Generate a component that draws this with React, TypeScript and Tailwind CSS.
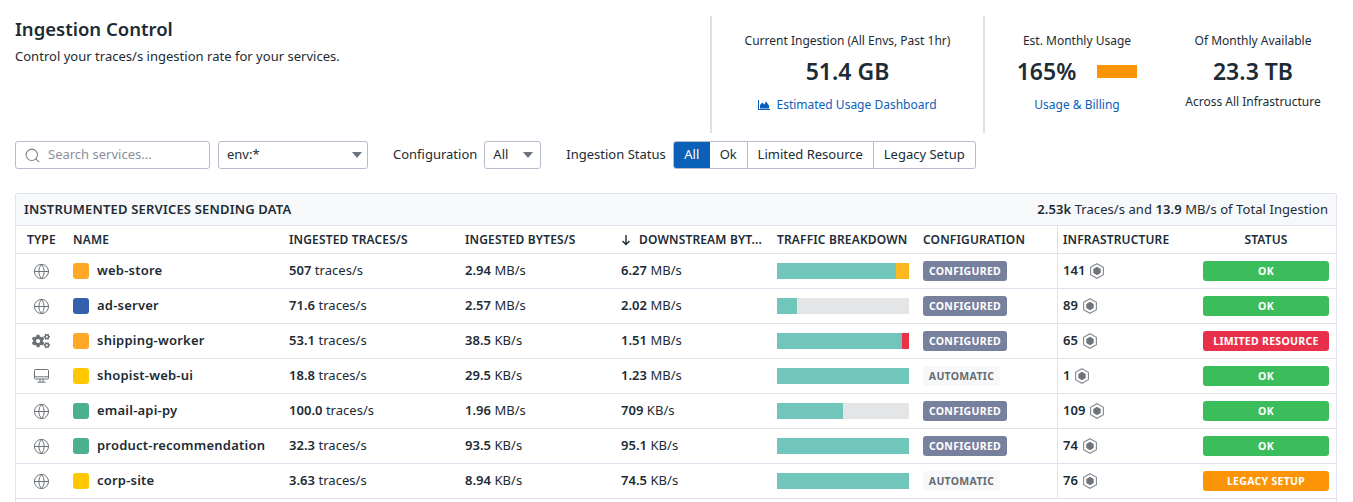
import { Globe, Search } from "lucide-react";
import { FaCogs } from "react-icons/fa";

type Service = {
  type: "web" | "worker" | "browser";
  color: string;
  name: string;
  traces: string;
  bytes: string;
  bytesUnit: string;
  down: string;
  downUnit: string;
  bar: number;
  extra?: string;
  extraWidth?: number;
  config: "CONFIGURED" | "AUTOMATIC";
  infra: number;
  status: "OK" | "LIMITED RESOURCE" | "LEGACY SETUP";
};

const services: Service[] = [
  { type: "web", color: "bg-[#ffa726]", name: "web-store", traces: "507", bytes: "2.94", bytesUnit: "MB/s", down: "6.27", downUnit: "MB/s", bar: 119, extra: "bg-[#fdb71f]", extraWidth: 13, config: "CONFIGURED", infra: 141, status: "OK" },
  { type: "web", color: "bg-[#3560ab]", name: "ad-server", traces: "71.6", bytes: "2.57", bytesUnit: "MB/s", down: "2.02", downUnit: "MB/s", bar: 20, config: "CONFIGURED", infra: 89, status: "OK" },
  { type: "worker", color: "bg-[#ffa726]", name: "shipping-worker", traces: "53.1", bytes: "38.5", bytesUnit: "KB/s", down: "1.51", downUnit: "MB/s", bar: 125, extra: "bg-[#eb3145]", extraWidth: 7, config: "CONFIGURED", infra: 65, status: "LIMITED RESOURCE" },
  { type: "browser", color: "bg-[#ffc800]", name: "shopist-web-ui", traces: "18.8", bytes: "29.5", bytesUnit: "KB/s", down: "1.23", downUnit: "MB/s", bar: 132, config: "AUTOMATIC", infra: 1, status: "OK" },
  { type: "web", color: "bg-[#4caf8e]", name: "email-api-py", traces: "100.0", bytes: "1.96", bytesUnit: "MB/s", down: "709", downUnit: "KB/s", bar: 66, config: "CONFIGURED", infra: 109, status: "OK" },
  { type: "web", color: "bg-[#4caf8e]", name: "product-recommendation", traces: "32.3", bytes: "93.5", bytesUnit: "KB/s", down: "95.1", downUnit: "KB/s", bar: 132, config: "CONFIGURED", infra: 74, status: "OK" },
  { type: "web", color: "bg-[#ffc800]", name: "corp-site", traces: "3.63", bytes: "8.94", bytesUnit: "KB/s", down: "74.5", downUnit: "KB/s", bar: 132, config: "AUTOMATIC", infra: 76, status: "LEGACY SETUP" },
];

const grid = "grid grid-cols-[57px_216px_176px_156px_156px_146px_134px_138px_141px]";

function Caret() {
  return <span className="h-0 w-0 border-x-[5px] border-t-[6px] border-x-transparent border-t-[#6b7280]" />;
}

function Hex() {
  return (
    <svg viewBox="0 0 14 16" className="h-4 w-[14px]">
      <path d="M7 .7 L13.4 4.3 V11.7 L7 15.3 L.6 11.7 V4.3 Z" fill="none" stroke="#85898f" strokeWidth="1.1" />
      <path d="M7 3.8 L10.7 5.9 V10.1 L7 12.2 L3.3 10.1 V5.9 Z" fill="#6f747b" />
    </svg>
  );
}

function TypeIcon({ type }: { type: Service["type"] }) {
  if (type === "worker") return <FaCogs className="h-[18px] w-[18px] text-[#6b7177]" />;
  if (type === "browser") {
    return (
      <svg viewBox="0 0 15 14" className="h-[14px] w-[15px] text-[#6b7177]" fill="none" stroke="currentColor" strokeWidth="1">
        <rect x=".5" y=".5" width="14" height="9.5" rx="1" />
        <path d="M.5 7.8h14M6 10v3M9 10v3M3.5 13.2h8" />
      </svg>
    );
  }
  return <Globe className="h-[17px] w-[17px] text-[#6b7177]" strokeWidth={1.4} />;
}

function Row({ s }: { s: Service }) {
  const statusColor = s.status === "OK" ? "bg-[#3cbd5c]" : s.status === "LEGACY SETUP" ? "bg-[#fb9507]" : "bg-[#e9304a]";
  return (
    <div className={`${grid} h-[35px] items-center border-b border-[#dfe1ec] text-[13px] tracking-[0.03px]`}>
      <div className="flex justify-center pr-[9px] pl-[2px]"><TypeIcon type={s.type} /></div>
      <div className="flex items-center gap-2">
        <span className={`h-4 w-4 rounded-[3px] ${s.color}`} />
        <span className="font-semibold tracking-[0.22px]">{s.name}</span>
      </div>
      <div><b className="font-semibold">{s.traces}</b> traces/s</div>
      <div><b className="font-semibold">{s.bytes}</b> {s.bytesUnit}</div>
      <div><b className="font-semibold">{s.down}</b> {s.downUnit}</div>
      <div className="flex h-4 w-[132px] bg-[#e4e5e7]">
        <div className="h-full bg-[#70c6bb]" style={{ width: s.bar }} />
        {s.extra && <div className={`h-full ${s.extra}`} style={{ width: s.extraWidth }} />}
      </div>
      <div>
        {s.config === "CONFIGURED" ? (
          <span className="inline-flex h-5 w-[84px] items-center justify-center rounded-[3px] bg-[#77809c] text-[10.5px] font-bold tracking-[0.3px] text-white">CONFIGURED</span>
        ) : (
          <span className="inline-flex h-5 w-[77px] items-center justify-center rounded-[3px] bg-[#f7f8fa] text-[10.5px] font-bold tracking-[0.3px] text-[#666c74]">AUTOMATIC</span>
        )}
      </div>
      <div className="flex h-full items-center gap-[5px] border-l border-[#dfe1ec] pl-[5px]">
        <span className="font-semibold">{s.infra}</span>
        <Hex />
      </div>
      <div className="pr-[7px] pl-2">
        <div className={`flex h-5 items-center justify-center rounded-[3px] pt-px text-[10.5px] font-bold tracking-[0.3px] text-white ${statusColor}`}>{s.status}</div>
      </div>
    </div>
  );
}

export default function App() {
  return (
    <div className="h-[502px] overflow-hidden bg-white pl-[15px] pr-4 pt-4 text-[13px] text-[#1c2b34] [font-family:'Noto_Sans',sans-serif]">
      {/* page header and usage numbers */}
      <div className="flex h-[117px]">
        <div className="w-[695px]">
          <h1 className="text-[18.5px] leading-[26px] font-semibold">Ingestion Control</h1>
          <p className="mt-[5px] text-[13px] leading-[18px] tracking-[0.02px]">Control your traces/s ingestion rate for your services.</p>
        </div>
        <div className="flex w-[273px] flex-col items-center border-l-2 border-[#dde1ea] pt-4 text-center">
          <div className="text-xs leading-[18px]">Current Ingestion (All Envs, Past 1hr)</div>
          <div className="mt-[6px] text-[23px] leading-[30px] font-semibold">51.4 GB</div>
          <div className="mt-[10px] flex items-center gap-[6px] text-xs leading-[18px] text-[#0b60b8]">
            <svg viewBox="0 0 12 10" className="h-[10px] w-3" fill="currentColor">
              <path d="M0 0h1v9h11v1H0z" />
              <path d="M2 8.5V5l2.2-2.5L6.2 4.5 8 1.5l3 4v3z" />
            </svg>
            Estimated Usage Dashboard
          </div>
        </div>
        <div className="flex w-[187px] flex-col items-center border-l-2 border-[#dde1ea] pt-4 pr-[1px]">
          <div className="text-xs leading-[18px]">Est. Monthly Usage</div>
          <div className="mt-[6px] flex h-[30px] items-center gap-[21px]">
            <span className="text-[23px] leading-[30px] font-semibold">165%</span>
            <span className="h-[13px] w-10 bg-[#fb9507]" />
          </div>
          <div className="mt-[10px] text-xs leading-[18px] text-[#0b60b8]">Usage &amp; Billing</div>
        </div>
        <div className="flex w-[166px] flex-col items-center pt-4">
          <div className="text-xs leading-[18px] whitespace-nowrap">Of Monthly Available</div>
          <div className="mt-[6px] text-[23px] leading-[30px] font-semibold">23.3 TB</div>
          <div className="mt-[7px] text-xs leading-[18px] whitespace-nowrap">Across All Infrastructure</div>
        </div>
      </div>

      {/* filters */}
      <div className="mt-2 flex h-[28px] items-center">
        <div className="flex h-[28px] w-[195px] items-center gap-[6px] rounded-[3px] border border-[#b6bccb] pl-2 text-[#8a9099]">
          <Search className="h-[17px] w-[17px] text-[#7d838b]" strokeWidth={1.5} />
          <span className="ml-px">Search services...</span>
        </div>
        <div className="ml-2 flex h-[28px] w-[150px] items-center justify-between rounded-[3px] border border-[#b6bccb] pr-[5px] pl-2">
          env:*
          <Caret />
        </div>
        <span className="ml-[25px]">Configuration</span>
        <div className="ml-[7px] flex h-[28px] w-[57px] items-center justify-between rounded-[3px] border border-[#b6bccb] pr-[7px] pl-2">
          All
          <Caret />
        </div>
        <span className="ml-[25px]">Ingestion Status</span>
        <div className="ml-[7px] flex h-[28px] overflow-hidden rounded-[3px] border border-[#b6bccb]">
          <span className="flex w-[36px] items-center justify-center bg-[#0b60b8] text-white">All</span>
          <span className="flex w-[38px] items-center justify-center border-r border-[#b6bccb]">Ok</span>
          <span className="flex w-[126px] items-center justify-center border-r border-[#b6bccb]">Limited Resource</span>
          <span className="flex w-[101px] items-center justify-center">Legacy Setup</span>
        </div>
      </div>

      {/* services table */}
      <div className="mt-[24px] w-[1322px] rounded-t-[3px] border-x border-t border-[#dfe1ec]">
        <div className="flex h-[32px] items-center justify-between border-b border-[#dfe1ec] bg-[#f7f8fa] pr-2 pl-2">
          <span className="text-[13px] font-semibold tracking-[0.18px]">INSTRUMENTED SERVICES SENDING DATA</span>
          <span className="tracking-[0.07px]"><b className="font-semibold">2.53k</b> Traces/s and <b className="font-semibold">13.9</b> MB/s of Total Ingestion</span>
        </div>
        <div className={`${grid} h-[28px] items-center border-b border-[#dfe1ec] text-xs font-semibold tracking-[0.15px]`}>
          <div className="pl-[11px]">TYPE</div>
          <div>NAME</div>
          <div>INGESTED TRACES/S</div>
          <div>INGESTED BYTES/S</div>
          <div className="flex items-center gap-[8px]">
            <svg viewBox="0 0 10 12" className="h-3 w-[10px]" fill="none" stroke="currentColor" strokeWidth="1.4">
              <path d="M5 1v9.5M1.5 7 5 10.5 8.5 7" />
            </svg>
            <span>DOWNSTREAM BYT...</span>
          </div>
          <div>TRAFFIC BREAKDOWN</div>
          <div>CONFIGURATION</div>
          <div className="flex h-full items-center border-l border-[#dfe1ec] pl-[5px]">INFRASTRUCTURE</div>
          <div className="pr-[7px] pl-2 text-center">STATUS</div>
        </div>
        {services.map((s) => (
          <Row key={s.name} s={s} />
        ))}
        <div className="h-8" />
      </div>
    </div>
  );
}
